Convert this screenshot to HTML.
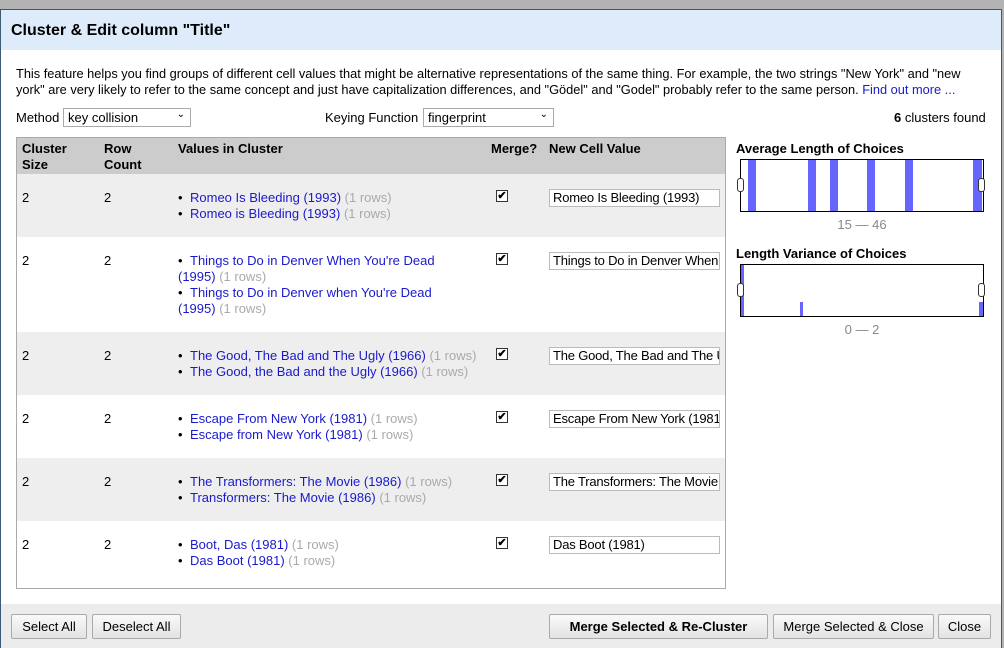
<!DOCTYPE html>
<html><head><meta charset="utf-8"><style>
*{box-sizing:border-box;margin:0;padding:0}
body{width:1004px;height:648px;overflow:hidden;background:#b3b3b3;font-family:"Liberation Sans",Arial,sans-serif;font-size:13px;color:#000;position:relative}
.a{position:absolute}
#dlg{left:0;top:9px;width:1002px;height:639px;background:#fff;border:1px solid #3d5a75;border-bottom:none}
#hdr{left:1px;top:10px;width:1000px;height:40px;background:#deebfb;font-weight:bold;font-size:16px;padding:12px 0 0 10px}
.row{left:17px;width:708px}
.g{background:#eee}
.lnk{color:#1a1acc}
.gr{color:#aaa}
.b{display:inline-block;width:12px}
.inp{width:171px;height:18px;border:1px solid #bbb;background:#fff;padding:1px 3px;white-space:nowrap;overflow:hidden;font-size:13px;line-height:14px;letter-spacing:-0.2px}
.cb{width:12px;height:12px;border:1px solid #333;background:#fff;font-size:11px;line-height:10px;text-align:center;font-weight:bold}
.btn{top:614px;height:25px;border:1px solid #aaa;border-radius:2px;background:linear-gradient(#fafafa,#e3e3e3);text-align:center;line-height:23px;font-size:13px}
.bar{background:#6666ff}
.hnd{width:7px;height:14px;border:1px solid #333;border-radius:3px;background:#fff}
</style></head><body>
<div class="a" style="left:0;top:0;width:1004px;height:9px;background:#b3b3b3"></div>
<div class="a" id="dlg"></div>
<div class="a" id="hdr">Cluster &amp; Edit column "Title"</div>
<div class="a" style="left:16px;top:66px;width:968px;line-height:16px;font-size:12.8px">This feature helps you find groups of different cell values that might be alternative representations of the same thing. For example, the two strings "New York" and "new york" are very likely to refer to the same concept and just have capitalization differences, and "Gödel" and "Godel" probably refer to the same person. <span class="lnk">Find out more ...</span></div>
<div class="a" style="left:16px;top:110px">Method</div>
<div class="a" style="left:63px;top:108px;width:128px;height:19px;border:1px solid #aaa;padding:1px 4px">key collision<span style="position:absolute;right:5px;top:0;font-size:10px">&#8964;</span></div>
<div class="a" style="left:325px;top:110px">Keying Function</div>
<div class="a" style="left:423px;top:108px;width:131px;height:19px;border:1px solid #aaa;padding:1px 4px">fingerprint<span style="position:absolute;right:5px;top:0;font-size:10px">&#8964;</span></div>
<div class="a" style="left:894px;top:110px"><b>6</b> clusters found</div>

<div class="a" style="left:16px;top:137px;width:710px;height:452px;border:1px solid #aaa;background:#fff"></div>
<div class="a row" style="top:138px;height:36px;background:#ccc;font-weight:bold;line-height:16px">
<div class="a" style="left:5px;top:3px">Cluster<br>Size</div>
<div class="a" style="left:87px;top:3px">Row<br>Count</div>
<div class="a" style="left:161px;top:3px">Values in Cluster</div>
<div class="a" style="left:474px;top:3px">Merge?</div>
<div class="a" style="left:532px;top:3px">New Cell Value</div>
</div>

<div class="a row g" style="top:174px;height:63px"></div>
<div class="a row g" style="top:332px;height:63px"></div>
<div class="a row g" style="top:458px;height:63px"></div>

<div style="line-height:16px">
<div class="a" style="left:22px;top:190px">2</div><div class="a" style="left:104px;top:190px">2</div>
<div class="a" style="left:178px;top:190px"><span class="b">•</span><span class="lnk">Romeo Is Bleeding (1993)</span> <span class="gr">(1 rows)</span><br><span class="b">•</span><span class="lnk">Romeo is Bleeding (1993)</span> <span class="gr">(1 rows)</span></div>
<div class="a cb" style="left:496px;top:190px">✔</div>
<div class="a inp" style="left:549px;top:189px">Romeo Is Bleeding (1993)</div>

<div class="a" style="left:22px;top:253px">2</div><div class="a" style="left:104px;top:253px">2</div>
<div class="a" style="left:178px;top:253px;width:275px"><span class="b">•</span><span class="lnk">Things to Do in Denver When You're Dead (1995)</span> <span class="gr">(1 rows)</span><br><span class="b">•</span><span class="lnk">Things to Do in Denver when You're Dead (1995)</span> <span class="gr">(1 rows)</span></div>
<div class="a cb" style="left:496px;top:253px">✔</div>
<div class="a inp" style="left:549px;top:252px">Things to Do in Denver When You're Dead (1995)</div>

<div class="a" style="left:22px;top:348px">2</div><div class="a" style="left:104px;top:348px">2</div>
<div class="a" style="left:178px;top:348px"><span class="b">•</span><span class="lnk">The Good, The Bad and The Ugly (1966)</span> <span class="gr">(1 rows)</span><br><span class="b">•</span><span class="lnk">The Good, the Bad and the Ugly (1966)</span> <span class="gr">(1 rows)</span></div>
<div class="a cb" style="left:496px;top:348px">✔</div>
<div class="a inp" style="left:549px;top:347px">The Good, The Bad and The Ugly (1966)</div>

<div class="a" style="left:22px;top:411px">2</div><div class="a" style="left:104px;top:411px">2</div>
<div class="a" style="left:178px;top:411px"><span class="b">•</span><span class="lnk">Escape From New York (1981)</span> <span class="gr">(1 rows)</span><br><span class="b">•</span><span class="lnk">Escape from New York (1981)</span> <span class="gr">(1 rows)</span></div>
<div class="a cb" style="left:496px;top:411px">✔</div>
<div class="a inp" style="left:549px;top:410px">Escape From New York (1981)</div>

<div class="a" style="left:22px;top:474px">2</div><div class="a" style="left:104px;top:474px">2</div>
<div class="a" style="left:178px;top:474px"><span class="b">•</span><span class="lnk">The Transformers: The Movie (1986)</span> <span class="gr">(1 rows)</span><br><span class="b">•</span><span class="lnk">Transformers: The Movie (1986)</span> <span class="gr">(1 rows)</span></div>
<div class="a cb" style="left:496px;top:474px">✔</div>
<div class="a inp" style="left:549px;top:473px">The Transformers: The Movie (1986)</div>

<div class="a" style="left:22px;top:537px">2</div><div class="a" style="left:104px;top:537px">2</div>
<div class="a" style="left:178px;top:537px"><span class="b">•</span><span class="lnk">Boot, Das (1981)</span> <span class="gr">(1 rows)</span><br><span class="b">•</span><span class="lnk">Das Boot (1981)</span> <span class="gr">(1 rows)</span></div>
<div class="a cb" style="left:496px;top:537px">✔</div>
<div class="a inp" style="left:549px;top:536px">Das Boot (1981)</div>
</div>

<div class="a" style="left:736px;top:141px;font-weight:bold">Average Length of Choices</div>
<div class="a" style="left:740px;top:159px;width:244px;height:53px;border:1px solid #000"></div>
<div class="a bar" style="left:748px;top:160px;width:8px;height:51px"></div>
<div class="a bar" style="left:808px;top:160px;width:8px;height:51px"></div>
<div class="a bar" style="left:830px;top:160px;width:8px;height:51px"></div>
<div class="a bar" style="left:867px;top:160px;width:8px;height:51px"></div>
<div class="a bar" style="left:905px;top:160px;width:8px;height:51px"></div>
<div class="a bar" style="left:973px;top:160px;width:9px;height:51px"></div>
<div class="a hnd" style="left:737px;top:178px"></div>
<div class="a hnd" style="left:978px;top:178px"></div>
<div class="a" style="left:740px;top:217px;width:244px;text-align:center;color:#888">15 — 46</div>

<div class="a" style="left:736px;top:246px;font-weight:bold">Length Variance of Choices</div>
<div class="a" style="left:740px;top:264px;width:244px;height:53px;border:1px solid #000"></div>
<div class="a bar" style="left:741px;top:265px;width:3px;height:51px"></div>
<div class="a bar" style="left:800px;top:302px;width:3px;height:14px"></div>
<div class="a bar" style="left:979px;top:302px;width:4px;height:14px"></div>
<div class="a hnd" style="left:737px;top:283px"></div>
<div class="a hnd" style="left:978px;top:283px"></div>
<div class="a" style="left:740px;top:322px;width:244px;text-align:center;color:#888">0 — 2</div>

<div class="a" style="left:1px;top:604px;width:1000px;height:44px;background:#ececec"></div>
<div class="a btn" style="left:11px;width:76px">Select All</div>
<div class="a btn" style="left:92px;width:89px">Deselect All</div>
<div class="a btn" style="left:549px;width:219px;font-weight:bold">Merge Selected &amp; Re-Cluster</div>
<div class="a btn" style="left:773px;width:161px">Merge Selected &amp; Close</div>
<div class="a btn" style="left:938px;width:53px">Close</div>
</body></html>
